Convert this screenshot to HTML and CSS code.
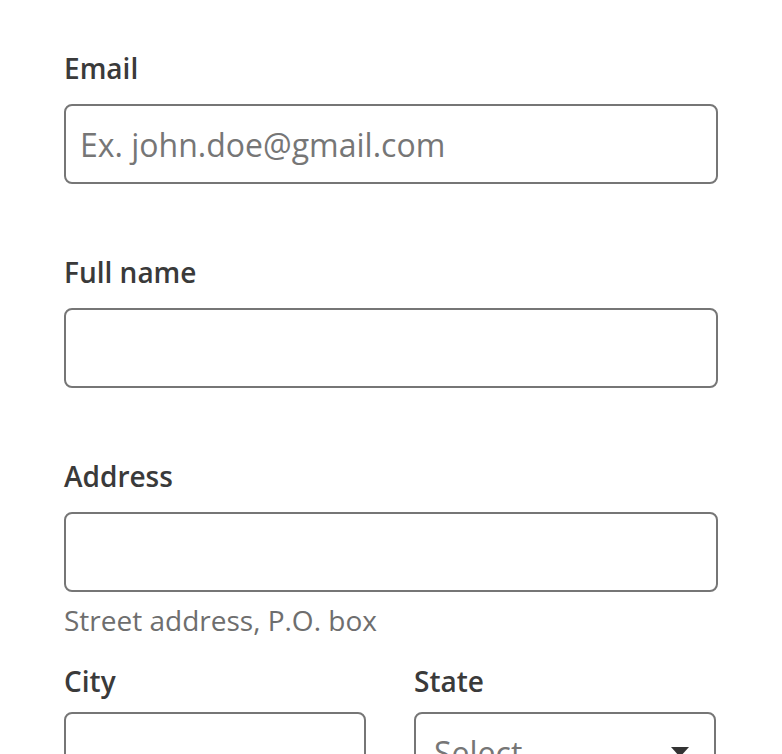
FILE: index.html
```html
<!DOCTYPE html>
<html lang="en">
<head>
<meta charset="utf-8">
<link rel="stylesheet" href="styles.css">
<title>Form</title>
</head>
<body>
<form class="form">
  <div class="field">
    <label class="label" for="email">Email</label>
    <input class="input" id="email" type="email" placeholder="Ex. john.doe@gmail.com">
  </div>
  <div class="field">
    <label class="label" for="name">Full name</label>
    <input class="input" id="name" type="text">
  </div>
  <div class="field field-address">
    <label class="label" for="addr">Address</label>
    <input class="input" id="addr" type="text">
    <div class="hint">Street address, P.O. box</div>
  </div>
  <div class="row">
    <div class="col">
      <label class="label label-row" for="city">City</label>
      <input class="input" id="city" type="text">
    </div>
    <div class="col">
      <label class="label label-row" for="state">State</label>
      <div class="select">
        <span class="select-text">Select</span>
        <svg class="caret" width="18" height="10" viewBox="0 0 18 10"><path d="M0 0h18L9 10z" fill="#333"/></svg>
      </div>
    </div>
  </div>
</form>
</body>
</html>
```
FILE: styles.css
```css
html, body { margin: 0; padding: 0; background: #fff; }
body {
  font-family: "Open Sans", "Noto Sans", sans-serif;
  color: #333;
  overflow: hidden;
  height: 754px;
}
.form {
  padding: 50px 64px 0 64px;
  width: 654px;
}
.field { margin-bottom: 70px; }
.field-address { margin-bottom: 25px; }
.label {
  display: block;
  font-size: 28px;
  font-weight: 600;
  line-height: 36px;
  color: #3a3a3a;
  margin-bottom: 18px;
}
.label-row { margin-bottom: 13px; }
.input {
  display: block;
  box-sizing: border-box;
  width: 100%;
  height: 80px;
  border: 2px solid #767676;
  border-radius: 8px;
  padding: 0 14px;
  font-family: "Open Sans", sans-serif;
  font-size: 32px;
  color: #333;
  background: #fff;
  outline: none;
}
.input::placeholder { color: #767676; }
.hint {
  margin-top: 10px;
  font-size: 28px;
  line-height: 36px;
  color: #6e6e6e;
}
.row {
  display: flex;
  gap: 48px;
}
.col { width: 302px; }
.select {
  box-sizing: border-box;
  height: 80px;
  margin-top: 2px;
  border: 2px solid #767676;
  border-radius: 8px;
  padding: 0 25px 0 18px;
  display: flex;
  align-items: center;
  justify-content: space-between;
}
.select-text { font-size: 32px; color: #767676; }
```
